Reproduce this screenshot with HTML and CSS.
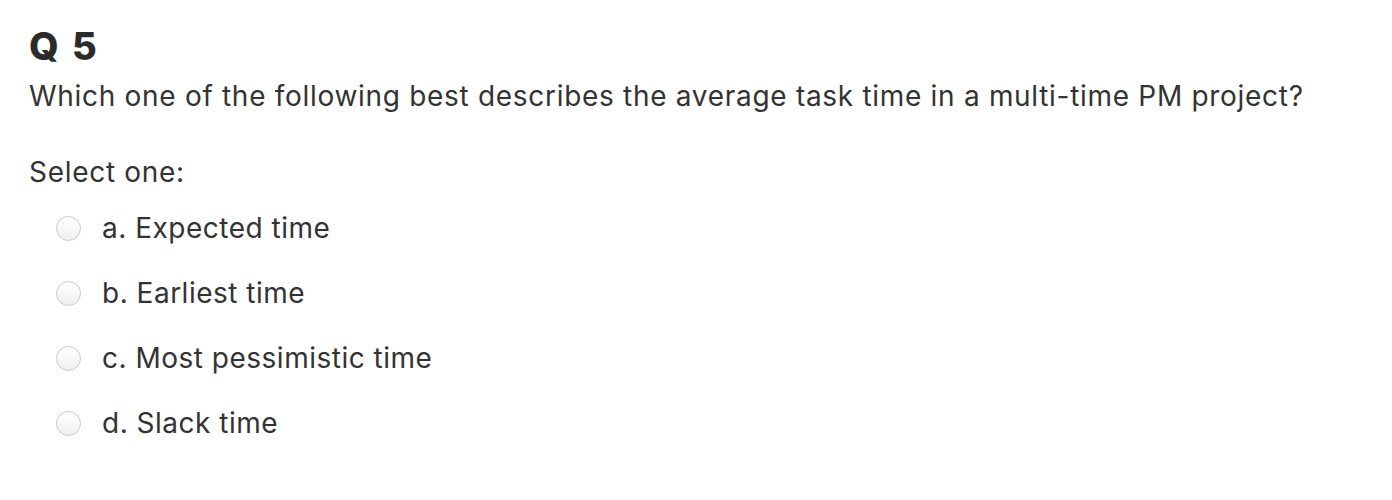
FILE: index.html
```html
<!DOCTYPE html>
<html>
<head>
<meta charset="utf-8">
<link rel="stylesheet" href="styles.css">
</head>
<body>
<div class="q">
  <h2 class="qno">Q 5</h2>
  <p class="qtext">Which one of the following best describes the average task time in a multi-time PM project?</p>
  <p class="prompt">Select one:</p>
  <div class="answers">
    <label class="opt"><span class="radio"></span><span class="lbl">a. Expected time</span></label>
    <label class="opt"><span class="radio"></span><span class="lbl">b. Earliest time</span></label>
    <label class="opt"><span class="radio"></span><span class="lbl">c. Most pessimistic time</span></label>
    <label class="opt"><span class="radio"></span><span class="lbl">d. Slack time</span></label>
  </div>
</div>
</body>
</html>
```

FILE: styles.css
```css
html, body { margin: 0; padding: 0; background: #fff; }
body { font-family: Inter, "Open Sans", sans-serif; color: #333; }
.q { padding: 26px 30px 0 29px; }
.qno { margin: 0; font-size: 38px; font-weight: 800; line-height: 40px; color: #2b2b2b; letter-spacing: 2.5px; }
.qtext { margin: 12px 0 0 0; font-size: 28px; line-height: 36px; letter-spacing: 0.7px; }
.prompt { margin: 40px 0 0 0; font-size: 28px; line-height: 36px; letter-spacing: 0.7px; }
.answers { display: flex; flex-direction: column; gap: 29px; margin-top: 20px; padding-left: 27px; }
.opt { display: flex; align-items: center; gap: 21px; height: 36px; font-size: 28px; letter-spacing: 0.5px; }
.radio { flex: none; width: 25px; height: 25px; box-sizing: border-box; border-radius: 50%; border: 1px solid #c8c8c8; background: linear-gradient(#fff, #f0f0f0); }
```
